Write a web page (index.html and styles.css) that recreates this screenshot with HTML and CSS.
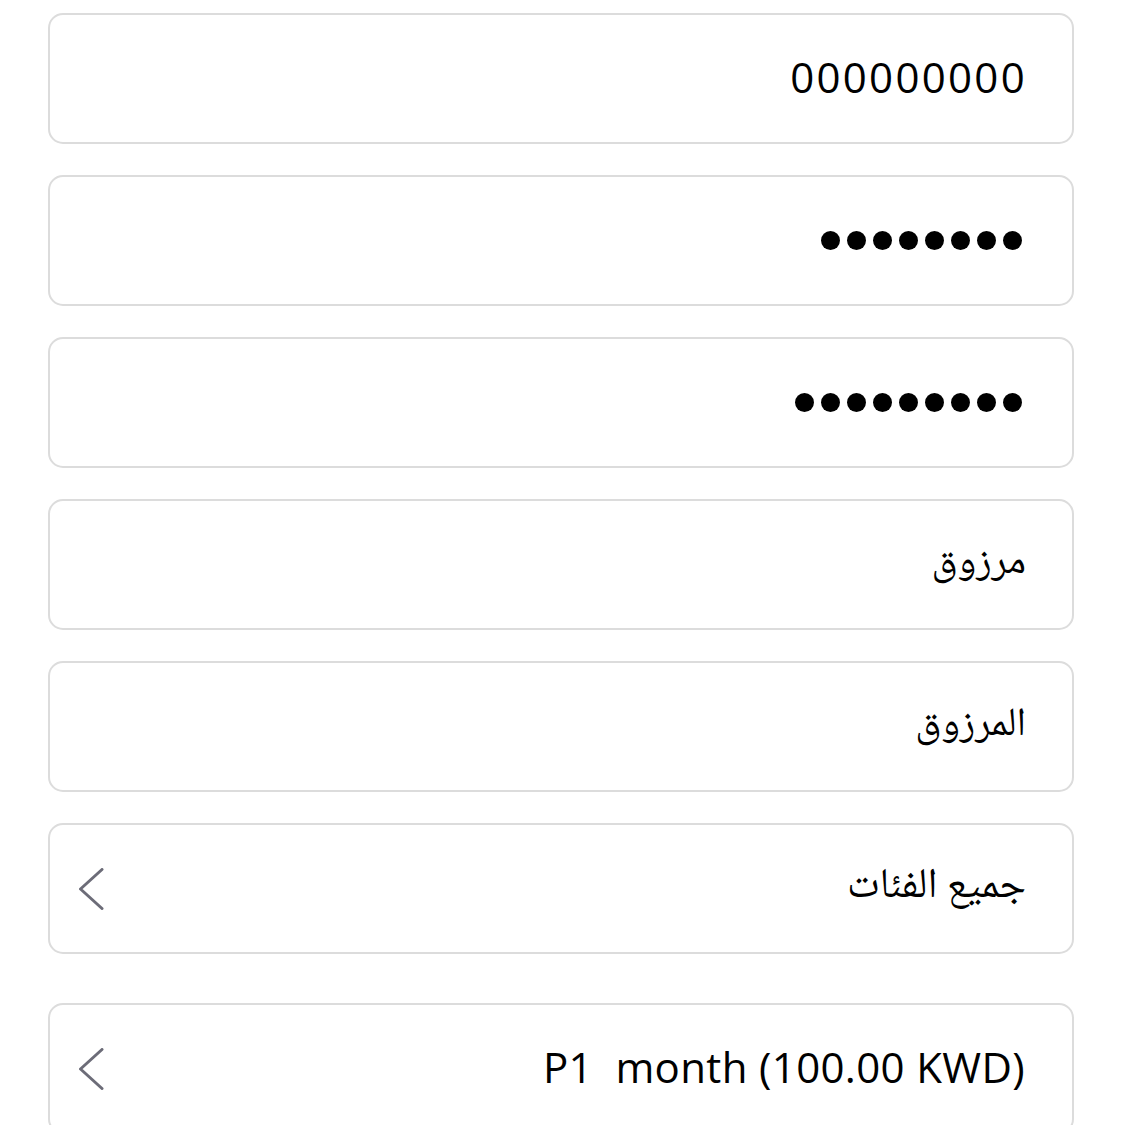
FILE: index.html
```html
<!DOCTYPE html>
<html lang="ar" dir="rtl">
<head>
<meta charset="utf-8">
<title>Form</title>
<link rel="stylesheet" href="styles.css">
</head>
<body>
<main class="form">
  <div class="field"><span class="value latin digits">000000000</span></div>
  <div class="field"><span class="dots" aria-label="password"><i></i><i></i><i></i><i></i><i></i><i></i><i></i><i></i></span></div>
  <div class="field"><span class="dots" aria-label="password"><i></i><i></i><i></i><i></i><i></i><i></i><i></i><i></i><i></i></span></div>
  <div class="field"><span class="value arabic">مرزوق</span></div>
  <div class="field"><span class="value arabic">المرزوق</span></div>
  <div class="field select">
    <span class="value arabic">جميع الفئات</span>
    <svg class="chev" viewBox="0 0 26 42" width="26" height="42"><path d="M24 1.5 L2.5 21 L24 40.5" fill="none" stroke="#6c6c78" stroke-width="3" stroke-linecap="round" stroke-linejoin="round"/></svg>
  </div>
  <div class="field select plan">
    <span class="value latin plan-text" dir="ltr">P1&nbsp; month (100.00 KWD)</span>
    <svg class="chev" viewBox="0 0 26 42" width="26" height="42"><path d="M24 1.5 L2.5 21 L24 40.5" fill="none" stroke="#6c6c78" stroke-width="3" stroke-linecap="round" stroke-linejoin="round"/></svg>
  </div>
</main>
</body>
</html>
```

FILE: styles.css
```css
html, body {
  margin: 0;
  padding: 0;
  background: #ffffff;
}
body {
  font-family: "Open Sans", "Noto Sans", sans-serif;
  color: #000;
}
.form {
  display: flex;
  flex-direction: column;
  gap: 31px;
  padding: 13px 48px 0 48px;
}
.field {
  box-sizing: border-box;
  height: 131px;
  border: 2px solid #dcdcdc;
  border-radius: 15px;
  display: flex;
  align-items: center;
  justify-content: space-between;
  padding: 0 46px 0 28px;
  background: #fff;
}
.field.plan {
  margin-top: 18px;
}
.value {
  font-size: 42px;
  line-height: 1;
  white-space: pre;
}
.latin {
  font-family: "Open Sans", "Noto Sans", sans-serif;
  margin-top: -4px;
}
.digits {
  letter-spacing: 2.3px;
  margin-left: -2px;
  margin-right: -1px;
}
.plan-text {
  letter-spacing: 0.35px;
  margin-right: 1px;
}
.arabic {
  font-family: "Noto Naskh Arabic", "Noto Sans Arabic", "DejaVu Sans", serif;
  font-size: 40px;
  margin-top: -2px;
}
.select .arabic {
  font-size: 42px;
}
.dots {
  display: flex;
  gap: 7px;
  margin-right: 4px;
}
.dots i {
  display: block;
  width: 19px;
  height: 19px;
  border-radius: 50%;
  background: #000;
}
.chev {
  display: block;
}
```
